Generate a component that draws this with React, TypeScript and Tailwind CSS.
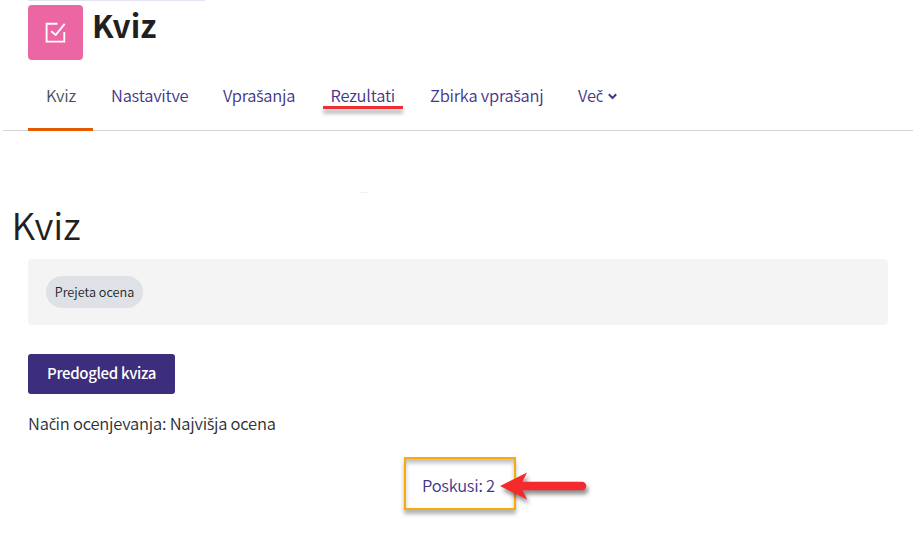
import React from 'react'

const tabs = [
    { label: 'Kviz', box: 'w-[65px]', active: true },
    { label: 'Nastavitve', box: 'w-[112px]' },
    { label: 'Vprašanja', box: 'w-[107.5px]' },
    { label: 'Rezultati', box: 'w-[99.5px]', marked: true },
    { label: 'Zbirka vprašanj', box: 'w-[148px]' },
    { label: 'Več', box: 'w-[76px]', more: true },
]

// the CJK face has no precomposed carons, so those letters come from Open Sans
function Text({ children }: { children: string }) {
    return (
        <>
            {children.split(/([čš])/).map((part, i) =>
                /[čš]/.test(part) ? (
                    <span key={i} className="-mr-[0.3px] font-['Open_Sans',sans-serif] text-[0.94em] font-normal leading-none">{part}</span>
                ) : (
                    part
                )
            )}
        </>
    )
}

function QuizIcon() {
    return (
        <div className="flex h-[55px] w-[55px] items-center justify-center rounded-[4px] bg-[#eb66a2]">
            <svg width="22" height="22" viewBox="0 0 22 22" fill="none" stroke="white" strokeWidth="1.9">
                <path d="M12.5 1.8H1.6V19.6H19.3V10" />
                <path d="M6.2 9.2L10.7 13L19.7 1.8" />
            </svg>
        </div>
    )
}

function Tabs() {
    return (
        <nav className="ml-[3px] mt-[1px] flex h-[70px] w-[910px] border-b border-[#d5d5d5] pl-[25px] text-[16.5px] tracking-[-0.22px] text-[#43358a]">
            {tabs.map((tab) => (
                <a
                    key={tab.label}
                    className={`relative h-[70px] whitespace-nowrap pl-[18px] leading-[68px] ${tab.box} ${tab.active ? 'border-b-[3px] border-[#e55a00] text-[#495057]' : ''}`}
                >
                    <Text>{tab.label}</Text>
                    {tab.marked && (
                        <span className="absolute left-[10.5px] top-[45px] h-[3px] w-[80px] bg-[#f02d32] shadow-[0_4px_4px_rgba(0,0,0,0.4)]" />
                    )}
                    {tab.more && (
                        <svg className="mb-[2px] ml-[5.5px] inline-block" width="9" height="7" viewBox="0 0 9 7" fill="none" stroke="currentColor" strokeWidth="2">
                            <path d="M0.8 1.3L4.5 5L8.2 1.3" />
                        </svg>
                    )}
                </a>
            ))}
        </nav>
    )
}

function Arrow() {
    return (
        <svg className="absolute left-[93px] top-[8px] overflow-visible" width="90" height="36" viewBox="0 0 90 36">
            <g className="drop-shadow-[2px_4px_2px_rgba(0,0,0,0.45)]">
                <path d="M1 19L28 5.5L23.5 14.7H83A4.3 4.3 0 0 1 83 23.3H23.5L28 32.5Z" fill="#f42a2d" />
            </g>
        </svg>
    )
}

function App() {
    return (
        <div className="h-[542px] w-[922px] overflow-hidden bg-white font-['Noto_Sans_CJK_SC','Noto_Sans',sans-serif] font-[350] text-[#212529]">
            <div className="ml-[28px] h-px w-[177px] bg-[#e4e2f3]" />
            <header className="mt-[4px] flex h-[55px] pl-[28px]">
                <QuizIcon />
                <h1 className="ml-[9px] text-[31.5px] font-bold leading-[38px] text-[#231f20]">Kviz</h1>
            </header>
            <Tabs />
            <main className="pt-[61px]">
                <div className="ml-[359px] h-px w-[10px] rounded-full bg-[#f0f0f0]" />
                <h2 className="ml-[11.5px] mt-[8px] h-[58px] text-[37px] leading-[46px] text-[#231f20]">Kviz</h2>
                <div className="ml-[28px] h-[66px] w-[860px] rounded-[4px] bg-[#f4f4f4] pl-[18px] pt-[17px]">
                    <div className="h-[32px] w-[97px] whitespace-nowrap rounded-full bg-[#dee2e6] text-center text-[12.7px] leading-[31px]">Prejeta ocena</div>
                </div>
                <button className="ml-[28px] mt-[29px] block h-[40px] w-[147px] whitespace-nowrap rounded-[3px] bg-[#3c2d7d] pb-[3px] text-[15px] font-medium leading-[37px] tracking-[-0.35px] text-white">
                    Predogled kviza
                </button>
                <p className="ml-[28px] mt-[16px] h-[47px] text-[16.5px] leading-[26px] tracking-[-0.22px] text-[#2b2f33]"><Text>Način ocenjevanja: Najvišja ocena</Text></p>
                <div className="relative ml-[404px] h-[53px] w-[112px] border-2 border-[#f8ab0c] pl-[16px] text-[16.5px] leading-[52px] tracking-[-0.25px] text-[#43358a] shadow-[0_4px_4px_rgba(0,0,0,0.3),inset_0_4px_4px_rgba(0,0,0,0.25)]">
                    <a className="whitespace-nowrap">Poskusi: 2</a>
                    <Arrow />
                </div>
            </main>
        </div>
    )
}

export default App
